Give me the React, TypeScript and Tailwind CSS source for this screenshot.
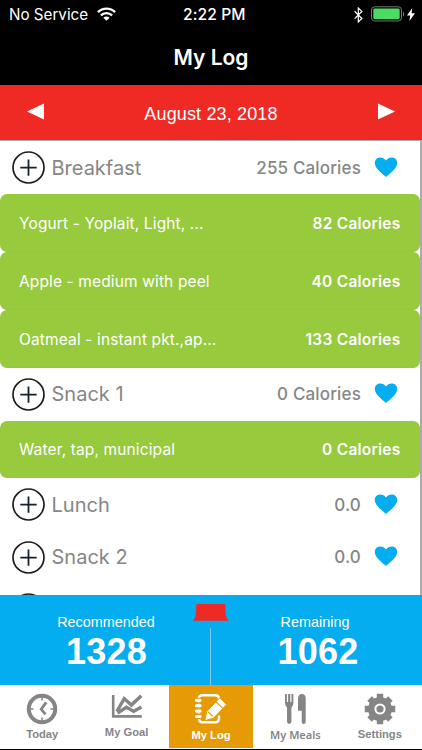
import React from "react";

type Food = { name: string; calories: string };
type Meal = { name: string; total: string; foods: Food[] };

const meals: Meal[] = [
    {
        name: "Breakfast",
        total: "255 Calories",
        foods: [
            { name: "Yogurt - Yoplait, Light, ...", calories: "82 Calories" },
            { name: "Apple - medium with peel", calories: "40 Calories" },
            { name: "Oatmeal - instant pkt.,ap...", calories: "133 Calories" },
        ],
    },
    {
        name: "Snack 1",
        total: "0 Calories",
        foods: [{ name: "Water, tap, municipal", calories: "0 Calories" }],
    },
    { name: "Lunch", total: "0.0", foods: [] },
    { name: "Snack 2", total: "0.0", foods: [] },
];

const StatusBar = () => (
    <div className="relative flex h-[30px] items-center justify-between pl-[9px] pr-[6px] text-white">
        <div className="flex items-center gap-[9px]">
            <span className="text-[15.2px]">No Service</span>
            <svg width="19" height="14" viewBox="0 0 19 14" fill="none" stroke="white" strokeWidth="2.4" className="-mt-[2px]">
                <path d="M0.9 5.2a12.2 12.2 0 0 1 17.2 0" />
                <path d="M3.9 8.4a8 8 0 0 1 11.2 0" />
                <path d="M9.5 13.8L6.3 10.8a4.6 4.6 0 0 1 6.4 0z" fill="white" stroke="none" />
            </svg>
        </div>
        <span className="absolute left-[183px] text-[15.6px] font-medium tracking-[0.1px]">2:22 PM</span>
        <div className="flex items-center">
            <svg width="9" height="16" viewBox="0 0 9 16" fill="none" stroke="white" strokeWidth="1.2" className="mr-[8px]">
                <path d="M0.6 4.3l7.3 7.2-3.6 3.4V1l3.6 3.4L0.6 11.6" />
            </svg>
            <svg width="34" height="16" viewBox="0 0 34 16" className="-mt-[2px]">
                <rect x="0.5" y="0.8" width="30" height="14.2" rx="3.2" fill="none" stroke="#777" />
                <rect x="2.3" y="2.6" width="26.4" height="10.6" rx="1.4" fill="#4cd964" />
                <path d="M32 5.4c1.7 0.8 1.7 4.2 0 5z" fill="#777" />
            </svg>
            <svg width="8" height="13" viewBox="0 0 8 13" fill="white" className="ml-[2px] mr-px -mt-[2px]">
                <path d="M5.2 0L0 7.4h3.2L2.4 13 8 5.2H4.6z" />
            </svg>
        </div>
    </div>
);

const DateBar = () => (
    <div className="flex h-[55px] shrink-0 items-center justify-between bg-[#ef2924] px-[27px] text-white">
        <svg width="17" height="17" viewBox="0 0 17 17" fill="white" className="-mt-[3px]">
            <path d="M0 8.5L17 0.5v16z" />
        </svg>
        <span className="mt-[3px] font-['Liberation_Sans',sans-serif] text-[18px] tracking-[0.15px]">August 23, 2018</span>
        <svg width="17" height="17" viewBox="0 0 17 17" fill="white" className="-mt-[3px]">
            <path d="M17 8.5L0 0.5v16z" />
        </svg>
    </div>
);

const AddIcon = () => (
    <svg width="33" height="33" viewBox="0 0 33 33" fill="none" className="shrink-0">
        <circle cx="16.5" cy="16.5" r="15.5" stroke="#1c1c1e" strokeWidth="1.7" />
        <path d="M16.5 8.4v16.4M8.3 16.6h16.4" stroke="#17202e" strokeWidth="1.8" />
    </svg>
);

const MealHeader: React.FC<{ meal: Meal }> = ({ meal }) => (
    <div className="flex h-[52.7px] shrink-0 items-center pl-[12px] pr-[22px] text-[#868686]">
        <AddIcon />
        <span className="ml-[6.5px] text-[20px]">{meal.name}</span>
        <span className="ml-auto mt-px text-[17px] font-medium tracking-[0.15px]">{meal.total}</span>
        <svg width="24" height="20" viewBox="0 0 24 20" fill="#03adef" className="ml-[13px] -mt-[2px]">
            <path d="M12 20C9 17 0.8 11.6 0.8 5.9 0.8 2.6 3.2 0.4 6.3 0.4c2.2 0 4.4 1.2 5.7 3 1.3-1.8 3.5-3 5.7-3 3.1 0 5.5 2.2 5.5 5.5C23.2 11.6 15 17 12 20z" />
        </svg>
    </div>
);

const FoodRow: React.FC<{ food: Food }> = ({ food }) => (
    <div className="flex h-[57.9px] shrink-0 items-center justify-between rounded-[7px] border-b border-[#9bbf57] bg-[#97ca3d] pl-[19px] pr-[19.5px] pt-[2px] text-[15.5px] text-white">
        <span className="tracking-[0.13px]">{food.name}</span>
        <span className="font-semibold tracking-[0.24px]">{food.calories}</span>
    </div>
);

const Summary = () => (
    <div className="relative flex h-[90px] shrink-0 bg-[#03adef] font-['Liberation_Sans',sans-serif] text-white">
        <div className="flex w-1/2 flex-col items-center pl-[1px] pt-[18px]">
            <span className="text-[14.4px] leading-[18px]">Recommended</span>
            <span className="ml-[1px] text-[36px] font-bold leading-[42px] tracking-[0.2px]">1328</span>
        </div>
        <div className="flex w-1/2 flex-col items-center pr-[3px] pt-[18px]">
            <span className="text-[14.4px] leading-[18px]">Remaining</span>
            <span className="ml-[6px] text-[36px] font-bold leading-[42px] tracking-[0.2px]">1062</span>
        </div>
        <svg width="38" height="90" viewBox="0 0 38 90" className="absolute left-[192px] top-0">
            <path d="M5.5 9h26.5q1.5 0 1.5 2c0 8 0 11 3.5 14.8H1C4.2 22 4 18 4 11q0-2 1.5-2z" fill="#ee2a26" />
            <path d="M18.5 33v57" stroke="#7fc9ea" />
        </svg>
    </div>
);

const TodayIcon = () => (
    <svg width="32" height="32" viewBox="0 0 32 32" fill="none" stroke="#858585">
        <circle cx="16" cy="16" r="13.2" strokeWidth="4" />
        <path d="M20.2 9.4l-5 6.9 4.3 5.1" strokeWidth="2.8" />
        <path d="M16 4v3.5M16 24.5V28M4 16h3.5M24.5 16H28" strokeWidth="1.6" />
    </svg>
);

const GoalIcon = () => (
    <svg width="32" height="26" viewBox="0 0 32 26" fill="none" stroke="#858585">
        <path d="M2.2 2v21.4h28.6" strokeWidth="2.6" />
        <path d="M5.8 18.5L13.2 5.6l7.2 6.5 9.9-9.4" strokeWidth="3.4" />
        <path d="M6.5 20l9-5.8 7.2 4.2 7.7-4.4" strokeWidth="3.4" />
    </svg>
);

const LogIcon = () => (
    <svg width="34" height="32" viewBox="0 0 34 32" fill="none" stroke="white">
        <path d="M25 8V6.2C25 3.7 23.5 2.3 21.3 2.3H8.2C6 2.3 5 3.4 5 5.7v19.6c0 2.7 1.2 4 3.4 4h12.9c2.3 0 3.7-1.4 3.7-4v-2.8" strokeWidth="2.5" />
        <path d="M2 7.3h6M2 12.7h6M2 18.1h6M2 23.5h6" stroke="#e59a06" strokeWidth="5" />
        <path d="M2.5 7.3h3.5M2.5 12.7h3.5M2.5 18.1h3.5M2.5 23.5h3.5" strokeWidth="3.2" strokeLinecap="round" />
        <path d="M25.8 4.7l6.9 6.8-13.4 13.8-8.5 2.4 1.9-9z" fill="white" stroke="#e59a06" strokeWidth="1" />
        <path d="M21.8 8.6l7 6.8M14.3 19l4.4 4.4" stroke="#e59a06" strokeWidth="1.2" />
    </svg>
);

const MealsIcon = () => (
    <svg width="23" height="32" viewBox="0 0 23 32" fill="#858585">
        <path d="M1 1h1.9v8h1.2V1h2.2v8h1.2V1h1.9v8c0 3-0.9 4.4-2 5.4v14.2q0 2.4-2.2 2.4T3 28.6V14.4C1.9 13.4 1 12 1 9z" />
        <path d="M14 6.5C14 3.2 15.2 1 18 1c2.4 0 3.7 1.7 3.7 4v24q0 2-2 2t-2-2V17.8H14z" />
    </svg>
);

const SettingsIcon = () => (
    <svg width="32" height="32" viewBox="0 0 32 32" fill="none" stroke="#858585">
        <path d="M16 0.8v30.4M0.8 16h30.4M5.6 5.6l20.8 20.8M26.4 5.6L5.6 26.4" strokeWidth="6.4" />
        <circle cx="16" cy="16" r="8.8" fill="white" strokeWidth="6.4" />
        <circle cx="16" cy="16" r="3.6" fill="#858585" stroke="none" />
    </svg>
);

const tabs = [
    { label: "Today", icon: <TodayIcon />, labelClass: "mt-[2px] text-[11.2px]" },
    { label: "My Goal", icon: <GoalIcon />, labelClass: "mt-[6px] text-[11.2px]" },
    { label: "My Log", icon: <LogIcon />, labelClass: "mt-[3px] text-[11.2px]", active: true },
    { label: "My Meals", icon: <MealsIcon />, labelClass: "mt-[3px] font-['Noto_Sans',sans-serif] text-[11px] font-semibold" },
    { label: "Settings", icon: <SettingsIcon />, labelClass: "mt-[2px] text-[11.2px]" },
];

const TabBar = () => (
    <div className="flex h-[65px] shrink-0 border-b border-black bg-white pb-px font-['Liberation_Sans',sans-serif] font-bold leading-[14px] text-[#858585]">
        {tabs.map((tab) => (
            <div
                key={tab.label}
                className={`flex flex-1 flex-col items-center pt-[8px] ${tab.active ? "bg-[#e59a06] text-white" : ""}`}
            >
                {tab.icon}
                <span className={`leading-[14px] ${tab.labelClass}`}>{tab.label}</span>
            </div>
        ))}
    </div>
);

export default function App() {
    return (
        <div className="flex h-[750px] w-[422px] flex-col overflow-hidden bg-black font-['Inter',sans-serif]">
            <div className="h-[85px] shrink-0 bg-black">
                <StatusBar />
                <h1 className="pt-[12.5px] text-center text-[21px] font-semibold leading-[30px] text-white">My Log</h1>
            </div>
            <DateBar />
            <div className="flex min-h-0 flex-1 flex-col overflow-hidden border-r-2 border-t border-[#aaa] bg-white pt-[0.5px]">
                {meals.map((meal) => (
                    <React.Fragment key={meal.name}>
                        <MealHeader meal={meal} />
                        {meal.foods.map((food) => (
                            <FoodRow key={food.name} food={food} />
                        ))}
                    </React.Fragment>
                ))}
                <div className="pl-[12px] pt-[9px]">
                    <AddIcon />
                </div>
            </div>
            <Summary />
            <TabBar />
        </div>
    );
}
